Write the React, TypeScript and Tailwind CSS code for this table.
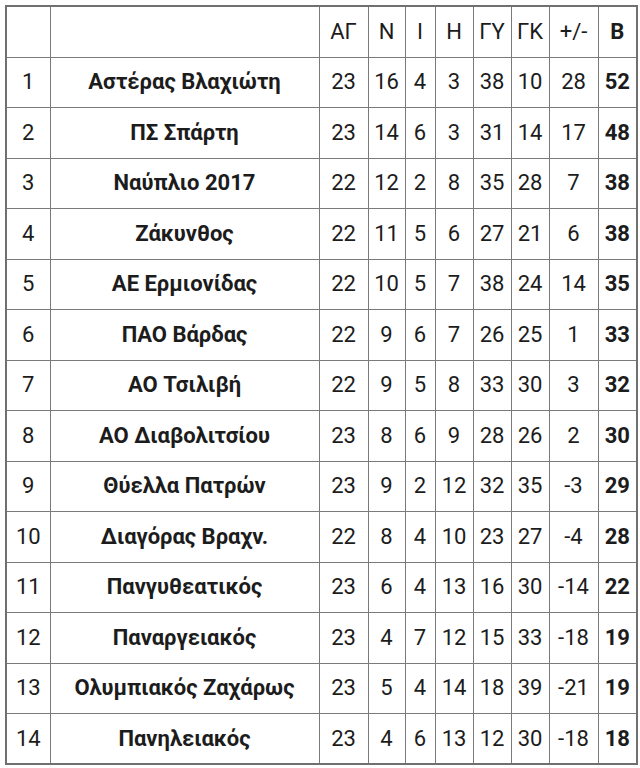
import React from "react";

const rows: [number, string, number, number, number, number, number, number, number, number][] = [
  [1, "Αστέρας Βλαχιώτη", 23, 16, 4, 3, 38, 10, 28, 52],
  [2, "ΠΣ Σπάρτη", 23, 14, 6, 3, 31, 14, 17, 48],
  [3, "Ναύπλιο 2017", 22, 12, 2, 8, 35, 28, 7, 38],
  [4, "Ζάκυνθος", 22, 11, 5, 6, 27, 21, 6, 38],
  [5, "ΑΕ Ερμιονίδας", 22, 10, 5, 7, 38, 24, 14, 35],
  [6, "ΠΑΟ Βάρδας", 22, 9, 6, 7, 26, 25, 1, 33],
  [7, "ΑΟ Τσιλιβή", 22, 9, 5, 8, 33, 30, 3, 32],
  [8, "ΑΟ Διαβολιτσίου", 23, 8, 6, 9, 28, 26, 2, 30],
  [9, "Θύελλα Πατρών", 23, 9, 2, 12, 32, 35, -3, 29],
  [10, "Διαγόρας Βραχν.", 22, 8, 4, 10, 23, 27, -4, 28],
  [11, "Πανγυθεατικός", 23, 6, 4, 13, 16, 30, -14, 22],
  [12, "Παναργειακός", 23, 4, 7, 12, 15, 33, -18, 19],
  [13, "Ολυμπιακός Ζαχάρως", 23, 5, 4, 14, 18, 39, -21, 19],
  [14, "Πανηλειακός", 23, 4, 6, 13, 12, 30, -18, 18],
];

const headers = ["ΑΓ", "Ν", "Ι", "Η", "ΓΥ", "ΓΚ", "+/-"];

export default function App() {
  const cell = "border border-[#7a7a7a] text-center align-middle p-0";
  return (
    <div className="bg-white w-[640px] h-[768px] pt-[5px] pl-[5px]" style={{ fontFamily: "Roboto, 'Noto Sans', sans-serif" }}>
      <table className="table-fixed border-collapse border-2 border-[#707070] w-[633px] text-[22px] text-[#1c1c1c] leading-none">
        <colgroup>
          <col className="w-[44px]" />
          <col className="w-[269px]" />
          <col className="w-[49px]" />
          <col className="w-[37px]" />
          <col className="w-[30px]" />
          <col className="w-[38px]" />
          <col className="w-[38px]" />
          <col className="w-[38px]" />
          <col className="w-[49px]" />
          <col className="w-[39px]" />
        </colgroup>
        <thead>
          <tr className="h-[51px]">
            <th className={cell}></th>
            <th className={cell}></th>
            {headers.map((h) => (
              <th key={h} className={`${cell} font-normal`}>{h}</th>
            ))}
            <th className={`${cell} font-bold`}>Β</th>
          </tr>
        </thead>
        <tbody>
          {rows.map((r) => (
            <tr key={r[0]} className="h-[50.5px]">
              <td className={cell}>{r[0]}</td>
              <td className={`${cell} font-bold`}>{r[1]}</td>
              <td className={cell}>{r[2]}</td>
              <td className={cell}>{r[3]}</td>
              <td className={cell}>{r[4]}</td>
              <td className={cell}>{r[5]}</td>
              <td className={cell}>{r[6]}</td>
              <td className={cell}>{r[7]}</td>
              <td className={cell}>{r[8]}</td>
              <td className={`${cell} font-bold`}>{r[9]}</td>
            </tr>
          ))}
        </tbody>
      </table>
    </div>
  );
}
